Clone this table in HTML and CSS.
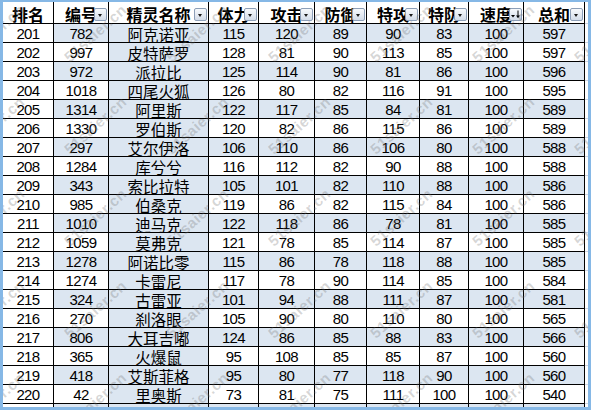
FILE: index.html
```html
<!DOCTYPE html>
<html lang="zh">
<head>
<meta charset="utf-8">
<link rel="stylesheet" href="styles.css">
</head>
<body>
<div class="frame">
  <div class="sheet">
    <div class="row head">
      <div class="c h rank">排名</div>
      <div class="c h">编号<span class="dd"></span></div>
      <div class="c h">精灵名称<span class="dd"></span></div>
      <div class="c h">体力<span class="dd"></span></div>
      <div class="c h">攻击<span class="dd"></span></div>
      <div class="c h">防御<span class="dd"></span></div>
      <div class="c h">特攻<span class="dd"></span></div>
      <div class="c h">特防<span class="dd"></span></div>
      <div class="c h">速度<span class="dd sort"><svg width="11" height="11" viewBox="0 0 11 11"><path d="M1 6h4l-2 2.5z" fill="#000"/><path d="M8 1.5v7" stroke="#000" stroke-width="1"/><path d="M6 6.5l2 2.5 2-2.5z" fill="#000"/></svg></span></div>
      <div class="c h">总和<span class="dd"></span></div>
      <div class="c pad h"></div>
    </div>
    <div class="row odd"><div class="c rank">201</div><div class="c">782</div><div class="c name">阿克诺亚</div><div class="c">115</div><div class="c">120</div><div class="c">89</div><div class="c">90</div><div class="c">83</div><div class="c">100</div><div class="c">597</div><div class="c pad"></div></div>
    <div class="row"><div class="c rank">202</div><div class="c">997</div><div class="c name">皮特萨罗</div><div class="c">128</div><div class="c">81</div><div class="c">90</div><div class="c">113</div><div class="c">85</div><div class="c">100</div><div class="c">597</div><div class="c pad"></div></div>
    <div class="row odd"><div class="c rank">203</div><div class="c">972</div><div class="c name">派拉比</div><div class="c">125</div><div class="c">114</div><div class="c">90</div><div class="c">81</div><div class="c">86</div><div class="c">100</div><div class="c">596</div><div class="c pad"></div></div>
    <div class="row"><div class="c rank">204</div><div class="c">1018</div><div class="c name">四尾火狐</div><div class="c">126</div><div class="c">80</div><div class="c">82</div><div class="c">116</div><div class="c">91</div><div class="c">100</div><div class="c">595</div><div class="c pad"></div></div>
    <div class="row odd"><div class="c rank">205</div><div class="c">1314</div><div class="c name">阿里斯</div><div class="c">122</div><div class="c">117</div><div class="c">85</div><div class="c">84</div><div class="c">81</div><div class="c">100</div><div class="c">589</div><div class="c pad"></div></div>
    <div class="row"><div class="c rank">206</div><div class="c">1330</div><div class="c name">罗伯斯</div><div class="c">120</div><div class="c">82</div><div class="c">86</div><div class="c">115</div><div class="c">86</div><div class="c">100</div><div class="c">589</div><div class="c pad"></div></div>
    <div class="row odd"><div class="c rank">207</div><div class="c">297</div><div class="c name">艾尔伊洛</div><div class="c">106</div><div class="c">110</div><div class="c">86</div><div class="c">106</div><div class="c">80</div><div class="c">100</div><div class="c">588</div><div class="c pad"></div></div>
    <div class="row"><div class="c rank">208</div><div class="c">1284</div><div class="c name">库兮兮</div><div class="c">116</div><div class="c">112</div><div class="c">82</div><div class="c">90</div><div class="c">88</div><div class="c">100</div><div class="c">588</div><div class="c pad"></div></div>
    <div class="row odd"><div class="c rank">209</div><div class="c">343</div><div class="c name">索比拉特</div><div class="c">105</div><div class="c">101</div><div class="c">82</div><div class="c">110</div><div class="c">88</div><div class="c">100</div><div class="c">586</div><div class="c pad"></div></div>
    <div class="row"><div class="c rank">210</div><div class="c">985</div><div class="c name">伯桑克</div><div class="c">119</div><div class="c">86</div><div class="c">82</div><div class="c">115</div><div class="c">84</div><div class="c">100</div><div class="c">586</div><div class="c pad"></div></div>
    <div class="row odd"><div class="c rank">211</div><div class="c">1010</div><div class="c name">迪马克</div><div class="c">122</div><div class="c">118</div><div class="c">86</div><div class="c">78</div><div class="c">81</div><div class="c">100</div><div class="c">585</div><div class="c pad"></div></div>
    <div class="row"><div class="c rank">212</div><div class="c">1059</div><div class="c name">莫弗克</div><div class="c">121</div><div class="c">78</div><div class="c">85</div><div class="c">114</div><div class="c">87</div><div class="c">100</div><div class="c">585</div><div class="c pad"></div></div>
    <div class="row odd"><div class="c rank">213</div><div class="c">1278</div><div class="c name">阿诺比零</div><div class="c">115</div><div class="c">86</div><div class="c">78</div><div class="c">118</div><div class="c">88</div><div class="c">100</div><div class="c">585</div><div class="c pad"></div></div>
    <div class="row"><div class="c rank">214</div><div class="c">1274</div><div class="c name">卡雷尼</div><div class="c">117</div><div class="c">78</div><div class="c">90</div><div class="c">114</div><div class="c">85</div><div class="c">100</div><div class="c">584</div><div class="c pad"></div></div>
    <div class="row odd"><div class="c rank">215</div><div class="c">324</div><div class="c name">古雷亚</div><div class="c">101</div><div class="c">94</div><div class="c">88</div><div class="c">111</div><div class="c">87</div><div class="c">100</div><div class="c">581</div><div class="c pad"></div></div>
    <div class="row"><div class="c rank">216</div><div class="c">270</div><div class="c name">刹洛眼</div><div class="c">105</div><div class="c">90</div><div class="c">80</div><div class="c">110</div><div class="c">80</div><div class="c">100</div><div class="c">565</div><div class="c pad"></div></div>
    <div class="row odd"><div class="c rank">217</div><div class="c">806</div><div class="c name">大耳吉嘟</div><div class="c">124</div><div class="c">86</div><div class="c">85</div><div class="c">88</div><div class="c">83</div><div class="c">100</div><div class="c">566</div><div class="c pad"></div></div>
    <div class="row"><div class="c rank">218</div><div class="c">365</div><div class="c name">火爆鼠</div><div class="c">95</div><div class="c">108</div><div class="c">85</div><div class="c">85</div><div class="c">87</div><div class="c">100</div><div class="c">560</div><div class="c pad"></div></div>
    <div class="row odd"><div class="c rank">219</div><div class="c">418</div><div class="c name">艾斯菲格</div><div class="c">95</div><div class="c">80</div><div class="c">77</div><div class="c">118</div><div class="c">90</div><div class="c">100</div><div class="c">560</div><div class="c pad"></div></div>
    <div class="row"><div class="c rank">220</div><div class="c">42</div><div class="c name">里奥斯</div><div class="c">73</div><div class="c">81</div><div class="c">75</div><div class="c">111</div><div class="c">100</div><div class="c">100</div><div class="c">540</div><div class="c pad"></div></div>
    <div class="row odd"><div class="c rank"></div><div class="c"></div><div class="c name"></div><div class="c"></div><div class="c"></div><div class="c"></div><div class="c"></div><div class="c"></div><div class="c"></div><div class="c"></div><div class="c pad"></div></div>
  </div>
  <div class="wm">
    <span>51saier.cn</span><span>51saier.cn</span><span>51saier.cn</span><span>51saier.cn</span><span>51saier.cn</span><span>51saier.cn</span><span>51saier.cn</span>
    <span>51saier.cn</span><span>51saier.cn</span><span>51saier.cn</span><span>51saier.cn</span><span>51saier.cn</span><span>51saier.cn</span><span>51saier.cn</span>
    <span>51saier.cn</span><span>51saier.cn</span><span>51saier.cn</span><span>51saier.cn</span><span>51saier.cn</span><span>51saier.cn</span><span>51saier.cn</span>
    <span>51saier.cn</span><span>51saier.cn</span><span>51saier.cn</span><span>51saier.cn</span><span>51saier.cn</span><span>51saier.cn</span><span>51saier.cn</span>
    <span>51saier.cn</span><span>51saier.cn</span><span>51saier.cn</span><span>51saier.cn</span><span>51saier.cn</span><span>51saier.cn</span><span>51saier.cn</span>
  </div>
</div>
</body>
</html>
```
FILE: styles.css
```css
html, body {
  margin: 0;
  padding: 0;
  background: #ffffff;
}
body {
  font-family: "Liberation Sans", "Noto Sans CJK SC", sans-serif;
  font-size: 15px;
  color: #000;
}
.frame {
  position: relative;
  width: 591px;
  height: 410px;
  box-sizing: border-box;
  border-style: solid;
  border-color: #86b8e6;
  border-width: 2px 3px 3px 3px;
  overflow: hidden;
  background: #fff;
}
.sheet {
  display: grid;
  grid-template-columns: 51px 55px 100px 50px 56px 52px 53px 49px 55px 61px 3px;
}
.row {
  display: contents;
}
.c {
  position: relative;
  box-sizing: border-box;
  height: 19px;
  border-right: 1px solid #000;
  border-bottom: 1px solid #000;
  display: flex;
  align-items: center;
  justify-content: center;
  padding-top: 1px;
  letter-spacing: -0.6px;
  white-space: nowrap;
  overflow: hidden;
}
.c.name {
  background: #dce6f1;
  letter-spacing: 0;
  font-size: 15.5px;
}
.row.odd .c {
  background: #dce6f1;
}
.row .c.rank {
  background: #fff;
}
.c.pad {
  border-right: none;
  border-bottom: 1px solid #cfd6e2;
  background: #fff !important;
}
.row.head .c {
  height: 22px;
  background: #fff;
  font-weight: 700;
  font-size: 16px;
  letter-spacing: 0;
  padding-top: 2px;
}
.dd {
  position: absolute;
  right: 1px;
  bottom: 2px;
  width: 13px;
  height: 13px;
  box-sizing: border-box;
  border: 1px solid #8d9fb8;
  border-radius: 2px;
  background: linear-gradient(#f7f9fc, #d4dde9);
}
.dd::after {
  content: "";
  position: absolute;
  left: 3px;
  top: 5px;
  border-left: 2.5px solid transparent;
  border-right: 2.5px solid transparent;
  border-top: 3px solid #1a1a1a;
}
.dd.sort::after {
  display: none;
}
.dd.sort svg {
  display: block;
}
.wm {
  position: absolute;
  left: -40px;
  top: -30px;
  display: grid;
  grid-template-columns: repeat(7, 102px);
  grid-auto-rows: 92px;
  pointer-events: none;
}
.wm span {
  display: block;
  transform: rotate(-42deg);
  transform-origin: 50% 50%;
  margin-top: 40px;
  font-family: "Liberation Sans", sans-serif;
  font-weight: 700;
  font-size: 15px;
  color: rgba(110, 110, 110, 0.28);
  letter-spacing: 0.5px;
}
```
